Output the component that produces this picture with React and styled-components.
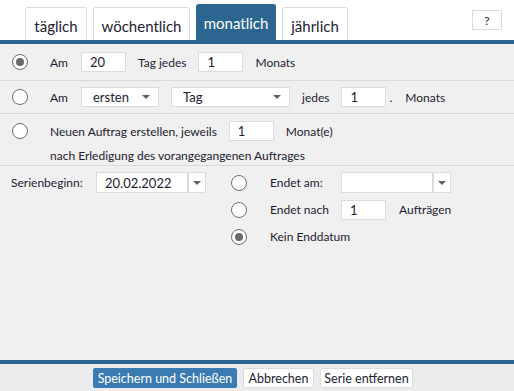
import React from 'react';
import styled, { createGlobalStyle } from 'styled-components';

const GlobalStyle = createGlobalStyle`
    html, body, #root {
        height: 100%;
        margin: 0;
    }
    body {
        font-family: Lato, "Noto Sans", sans-serif;
        font-size: 12px;
        color: #1d2230;
        background: #ffffff;
    }
    * {
        box-sizing: border-box;
    }
`;

const Page = styled.div`
    display: flex;
    flex-direction: column;
    height: 100%;
`;

const TabBar = styled.div`
    display: flex;
    align-items: flex-end;
    height: 40px;
    padding-left: 25px;
    gap: 6px;
    background: #ffffff;
    border-bottom: 4px solid #2b6590;
    box-sizing: content-box;
`;

const Tab = styled.div`
    display: flex;
    align-items: center;
    justify-content: center;
    width: ${(p) => p.$w}px;
    height: ${(p) => (p.$active ? '36px' : '33px')};
    font-size: 15px;
    border: 1px solid ${(p) => (p.$active ? '#2b6590' : '#dcdcdc')};
    border-bottom: none;
    border-radius: 3px 3px 0 0;
    background: ${(p) => (p.$active ? '#2b6590' : '#ffffff')};
    color: ${(p) => (p.$active ? '#ffffff' : '#1d2230')};
    padding-top: ${(p) => (p.$active ? '0' : '3px')};
`;

const HelpButton = styled.div`
    margin-left: auto;
    margin-right: 12px;
    align-self: center;
    width: 30px;
    height: 20px;
    border: 1px solid #dcdcdc;
    display: flex;
    align-items: center;
    justify-content: center;
    font-size: 12px;
`;

const Content = styled.div`
    flex: 1;
    background: #f0f0f0;
    display: flex;
    flex-direction: column;
`;

const OptionRow = styled.div`
    display: flex;
    align-items: ${(p) => (p.$top ? 'flex-start' : 'center')};
    height: ${(p) => p.$h}px;
    padding-top: ${(p) => p.$pt || 0}px;
    border-bottom: 1px solid #d9d9d9;
`;

const RadioCell = styled.div`
    width: 50px;
    padding-left: 12px;
    display: flex;
    align-items: center;
    height: ${(p) => p.$h || 'auto'};
`;

const Radio = styled.span`
    display: inline-block;
    width: 16px;
    height: 16px;
    border-radius: 50%;
    border: 1px solid #6e6e6e;
    background: #ffffff;
    position: relative;
    flex-shrink: 0;
    &::after {
        content: '';
        display: ${(p) => (p.$checked ? 'block' : 'none')};
        position: absolute;
        left: 3px;
        top: 3px;
        width: 8px;
        height: 8px;
        border-radius: 50%;
        background: #666a6e;
    }
`;

const Line = styled.div`
    display: flex;
    align-items: center;
    gap: 12px;
    height: 20px;
`;

const Stack = styled.div`
    display: flex;
    flex-direction: column;
    gap: 7px;
`;

const Label = styled.span`
    width: ${(p) => (p.$w ? p.$w + 'px' : 'auto')};
    margin-left: ${(p) => p.$ml || 0}px;
    white-space: nowrap;
`;

const Field = styled.div`
    width: ${(p) => p.$w}px;
    height: ${(p) => p.$h || 20}px;
    background: #ffffff;
    border: 1px solid #dcdcdc;
    padding-left: ${(p) => p.$pl || 8}px;
    padding-right: 8px;
    display: flex;
    align-items: center;
    justify-content: space-between;
    font-size: 13px;
`;

const Caret = styled.span`
    width: 0;
    height: 0;
    border-left: 4px solid transparent;
    border-right: 4px solid transparent;
    border-top: 4px solid #606060;
`;

const DropButton = styled.div`
    width: 18px;
    height: 21px;
    background: #ffffff;
    border: 1px solid #dcdcdc;
    display: flex;
    align-items: center;
    justify-content: center;
`;

const FieldGroup = styled.div`
    display: flex;
`;

const Series = styled.div`
    display: flex;
    padding: 6px 0 0 11px;
`;

const StartBlock = styled.div`
    display: flex;
    align-items: center;
    height: 21px;
`;

const EndList = styled.div`
    display: flex;
    flex-direction: column;
    gap: 6px;
    margin-left: 25px;
`;

const EndRow = styled.div`
    display: flex;
    align-items: center;
    height: 21px;
`;

const EndLabel = styled.span`
    width: 71px;
    margin-left: 23px;
    white-space: nowrap;
`;

const Footer = styled.div`
    height: 31px;
    border-top: 4px solid #2b6590;
    background: #ebecee;
    display: flex;
    justify-content: center;
    align-items: flex-start;
    padding-top: 4px;
    padding-right: 8px;
    gap: 6px;
`;

const Button = styled.div`
    height: 20px;
    width: ${(p) => p.$w}px;
    display: flex;
    align-items: center;
    justify-content: center;
    font-size: 12.5px;
    background: ${(p) => (p.$primary ? '#3a7bb1' : '#ffffff')};
    color: ${(p) => (p.$primary ? '#ffffff' : '#1d2230')};
    border: 1px solid ${(p) => (p.$primary ? '#3a7bb1' : '#dcdcdc')};
    border-radius: 2px;
`;

const Dot = styled.span`
    margin-left: -9px;
    margin-right: 1px;
`;

const App = () => {
    return (
        <Page>
            <GlobalStyle />
            <TabBar>
                <Tab $w={62}>täglich</Tab>
                <Tab $w={97}>wöchentlich</Tab>
                <Tab $w={80} $active>monatlich</Tab>
                <Tab $w={66}>jährlich</Tab>
                <HelpButton>?</HelpButton>
            </TabBar>
            <Content>
                <OptionRow $h={37}>
                    <RadioCell><Radio $checked /></RadioCell>
                    <Line>
                        <Label $w={19}>Am</Label>
                        <Field $w={45}>20</Field>
                        <Label>Tag jedes</Label>
                        <Field $w={45}>1</Field>
                        <Label>Monats</Label>
                    </Line>
                </OptionRow>
                <OptionRow $h={33}>
                    <RadioCell><Radio /></RadioCell>
                    <Line>
                        <Label $w={19}>Am</Label>
                        <Field $w={78} $pl={11}>ersten <Caret /></Field>
                        <Field $w={119} $pl={11}>Tag <Caret /></Field>
                        <Label>jedes</Label>
                        <Field $w={45}>1</Field>
                        <Dot>.</Dot>
                        <Label>Monats</Label>
                    </Line>
                </OptionRow>
                <OptionRow $h={52} $top $pt={7}>
                    <RadioCell $h="20px"><Radio /></RadioCell>
                    <Stack>
                        <Line>
                            <Label>Neuen Auftrag erstellen, jeweils</Label>
                            <Field $w={45}>1</Field>
                            <Label>Monat(e)</Label>
                        </Line>
                        <Label>nach Erledigung des vorangegangenen Auftrages</Label>
                    </Stack>
                </OptionRow>
                <Series>
                    <StartBlock>
                        <Label $w={85}>Serienbeginn:</Label>
                        <FieldGroup>
                            <Field $w={92} $h={21}>20.02.2022</Field>
                            <DropButton><Caret /></DropButton>
                        </FieldGroup>
                    </StartBlock>
                    <EndList>
                        <EndRow>
                            <Radio />
                            <EndLabel>Endet am:</EndLabel>
                            <FieldGroup>
                                <Field $w={92} $h={21} />
                                <DropButton><Caret /></DropButton>
                            </FieldGroup>
                        </EndRow>
                        <EndRow>
                            <Radio />
                            <EndLabel>Endet nach</EndLabel>
                            <Field $w={45}>1</Field>
                            <Label $ml={13}>Aufträgen</Label>
                        </EndRow>
                        <EndRow>
                            <Radio $checked />
                            <EndLabel>Kein Enddatum</EndLabel>
                        </EndRow>
                    </EndList>
                </Series>
            </Content>
            <Footer>
                <Button $primary $w={144}>Speichern und Schließen</Button>
                <Button $w={71}>Abbrechen</Button>
                <Button $w={93}>Serie entfernen</Button>
            </Footer>
        </Page>
    );
};

export default App;
